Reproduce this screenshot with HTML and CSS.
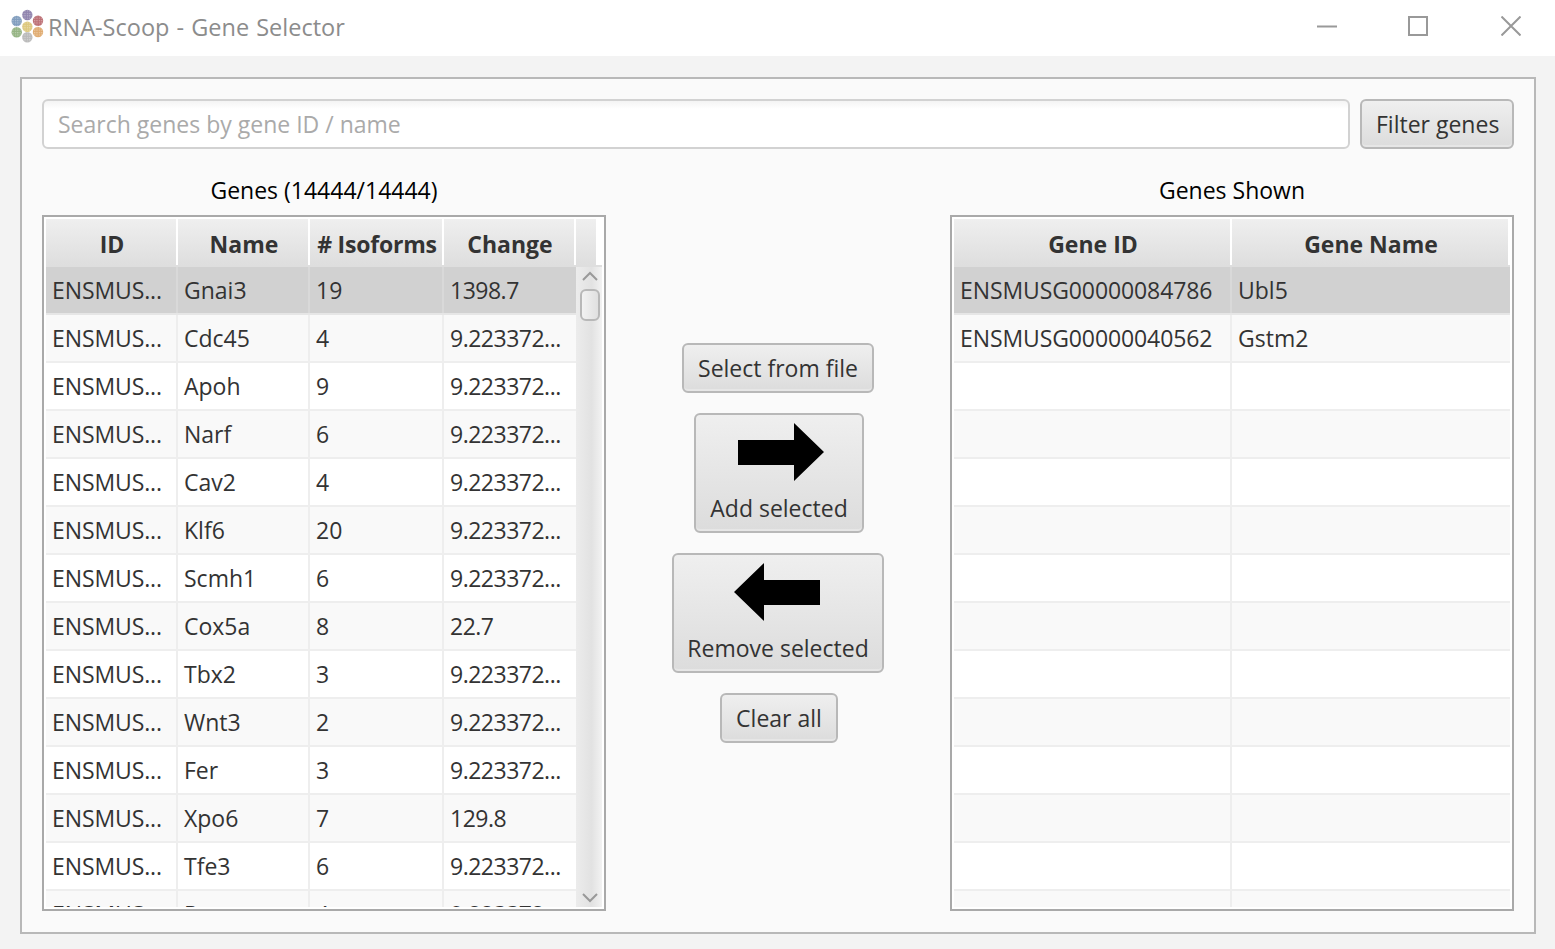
FILE: index.html

```html
<!DOCTYPE html>
<html lang="en">
<head>
  <meta charset="UTF-8" />
  <title>RNA-Scoop - Gene Selector</title>
  <link rel="stylesheet" href="styles.css">
</head>
<body>
  <div class="titlebar">
    <svg class="logo" width="36" height="36" viewBox="0 0 36 36">
      <defs>
        <pattern id="hatch" width="2.4" height="2.4" patternUnits="userSpaceOnUse">
          <rect width="1.2" height="1.2" fill="#fff" fill-opacity="0.4" />
        </pattern>
      </defs>
      <circle cx="17.3" cy="7" r="5.2" fill="#8f83ad" />
      <circle cx="6.7" cy="13" r="5.2" fill="#7f9cbd" />
      <circle cx="28" cy="12.7" r="5.2" fill="#bc6f74" />
      <circle cx="17.3" cy="18.7" r="5.2" fill="#dcc77c" />
      <circle cx="6.7" cy="24.3" r="5.2" fill="#94b382" />
      <circle cx="28" cy="24" r="5.2" fill="#e0ab70" />
      <circle cx="17.3" cy="29.3" r="5.2" fill="#b9b9b9" />
      <g fill="url(#hatch)">
        <circle cx="17.3" cy="7" r="5.2" />
        <circle cx="6.7" cy="13" r="5.2" />
        <circle cx="28" cy="12.7" r="5.2" />
        <circle cx="17.3" cy="18.7" r="5.2" />
        <circle cx="6.7" cy="24.3" r="5.2" />
        <circle cx="28" cy="24" r="5.2" />
        <circle cx="17.3" cy="29.3" r="5.2" />
      </g>
    </svg>
    <span class="title">RNA-Scoop - Gene Selector</span>
    <div class="winbtns">
      <svg width="20" height="20" viewBox="0 0 20 20"><path d="M0 10.5H20" stroke="#999" stroke-width="2" /></svg>
      <svg width="20" height="20" viewBox="0 0 20 20"><rect x="1" y="1" width="18" height="18" fill="none" stroke="#999" stroke-width="2" /></svg>
      <svg class="close" width="20" height="20" viewBox="0 0 20 20"><path d="M0.5 0.5L19.5 19.5M19.5 0.5L0.5 19.5" stroke="#999" stroke-width="2" /></svg>
    </div>
  </div>

  <div class="panel">
    <div class="searchrow">
      <input class="search" type="text" placeholder="Search genes by gene ID / name">
      <button class="btn filter">Filter genes</button>
    </div>

    <div class="columns">
      <div class="col">
        <div class="label">Genes (14444/14444)</div>
        <div class="table">
          <div class="thead">
            <div class="th w1">ID</div>
            <div class="th w2">Name</div>
            <div class="th w3 iso">#&nbsp;Isoforms</div>
            <div class="th w3 last">Change</div>
            <div class="th filler"></div>
          </div>
          <div class="tbody">
            <div class="rows">
              <div class="tr selected"><div class="td w1">ENSMUS...</div><div class="td w2">Gnai3</div><div class="td w3">19</div><div class="td num">1398.7</div></div>
              <div class="tr"><div class="td w1">ENSMUS...</div><div class="td w2">Cdc45</div><div class="td w3">4</div><div class="td num">9.223372...</div></div>
              <div class="tr"><div class="td w1">ENSMUS...</div><div class="td w2">Apoh</div><div class="td w3">9</div><div class="td num">9.223372...</div></div>
              <div class="tr"><div class="td w1">ENSMUS...</div><div class="td w2">Narf</div><div class="td w3">6</div><div class="td num">9.223372...</div></div>
              <div class="tr"><div class="td w1">ENSMUS...</div><div class="td w2">Cav2</div><div class="td w3">4</div><div class="td num">9.223372...</div></div>
              <div class="tr"><div class="td w1">ENSMUS...</div><div class="td w2">Klf6</div><div class="td w3">20</div><div class="td num">9.223372...</div></div>
              <div class="tr"><div class="td w1">ENSMUS...</div><div class="td w2">Scmh1</div><div class="td w3">6</div><div class="td num">9.223372...</div></div>
              <div class="tr"><div class="td w1">ENSMUS...</div><div class="td w2">Cox5a</div><div class="td w3">8</div><div class="td num">22.7</div></div>
              <div class="tr"><div class="td w1">ENSMUS...</div><div class="td w2">Tbx2</div><div class="td w3">3</div><div class="td num">9.223372...</div></div>
              <div class="tr"><div class="td w1">ENSMUS...</div><div class="td w2">Wnt3</div><div class="td w3">2</div><div class="td num">9.223372...</div></div>
              <div class="tr"><div class="td w1">ENSMUS...</div><div class="td w2">Fer</div><div class="td w3">3</div><div class="td num">9.223372...</div></div>
              <div class="tr"><div class="td w1">ENSMUS...</div><div class="td w2">Xpo6</div><div class="td w3">7</div><div class="td num">129.8</div></div>
              <div class="tr"><div class="td w1">ENSMUS...</div><div class="td w2">Tfe3</div><div class="td w3">6</div><div class="td num">9.223372...</div></div>
              <div class="tr"><div class="td w1">ENSMUS...</div><div class="td w2">Pcx</div><div class="td w3">4</div><div class="td num">9.223372...</div></div>
            </div>
            <div class="scrollbar">
              <svg class="chev" width="16" height="10" viewBox="0 0 16 10"><path d="M1 9L8 2L15 9" fill="none" stroke="#999" stroke-width="2" /></svg>
              <div class="thumb"></div>
              <svg class="chev down" width="16" height="10" viewBox="0 0 16 10"><path d="M1 1L8 8L15 1" fill="none" stroke="#999" stroke-width="2" /></svg>
            </div>
          </div>
        </div>
      </div>

      <div class="middle">
        <button class="btn">Select from file</button>
        <button class="btn big add">
          <svg width="86" height="58" viewBox="0 0 86 58"><path d="M0 17H56V0L86 29L56 58V42H0Z" fill="#000" /></svg>
          <span>Add selected</span>
        </button>
        <button class="btn big remove">
          <svg width="86" height="58" viewBox="0 0 86 58"><path d="M86 17H30V0L0 29L30 58V42H86Z" fill="#000" /></svg>
          <span>Remove selected</span>
        </button>
        <button class="btn clear">Clear all</button>
      </div>

      <div class="col">
        <div class="label">Genes Shown</div>
        <div class="table">
          <div class="thead">
            <div class="th w4">Gene ID</div>
            <div class="th w4">Gene Name</div>
          </div>
          <div class="tbody">
            <div class="rows">
              <div class="tr selected"><div class="td w4">ENSMUSG00000084786</div><div class="td">Ubl5</div></div>
              <div class="tr"><div class="td w4">ENSMUSG00000040562</div><div class="td">Gstm2</div></div>
              <div class="tr"><div class="td w4"></div><div class="td"></div></div>
              <div class="tr"><div class="td w4"></div><div class="td"></div></div>
              <div class="tr"><div class="td w4"></div><div class="td"></div></div>
              <div class="tr"><div class="td w4"></div><div class="td"></div></div>
              <div class="tr"><div class="td w4"></div><div class="td"></div></div>
              <div class="tr"><div class="td w4"></div><div class="td"></div></div>
              <div class="tr"><div class="td w4"></div><div class="td"></div></div>
              <div class="tr"><div class="td w4"></div><div class="td"></div></div>
              <div class="tr"><div class="td w4"></div><div class="td"></div></div>
              <div class="tr"><div class="td w4"></div><div class="td"></div></div>
              <div class="tr"><div class="td w4"></div><div class="td"></div></div>
              <div class="tr"><div class="td w4"></div><div class="td"></div></div>
            </div>
          </div>
        </div>
      </div>
    </div>
  </div>
</body>
</html>
```

FILE: styles.css

```css
* {
  box-sizing: border-box;
}
body {
  margin: 0;
  height: 949px;
  overflow: hidden;
  font-family: "Open Sans", "Noto Sans", sans-serif;
  font-size: 23px;
  background-color: #f3f3f3;
  color: #333;
}

/* window title */
.titlebar {
  height: 56px;
  background: #fff;
  display: flex;
  align-items: center;
  padding-left: 10px;
}
.logo {
  flex: none;
  margin-top: -4px;
}
.title {
  margin-left: 2px;
  margin-top: -2px;
  font-size: 23.5px;
  word-spacing: 1px;
  color: #8c8c8c;
}
.winbtns {
  margin-left: auto;
  margin-top: -4px;
  margin-right: 34px;
  display: flex;
  gap: 71px;
}
.winbtns svg {
  display: block;
}
.winbtns .close {
  margin-left: 2px;
}

/* main panel */
.panel {
  margin: 21px 19px 0 20px;
  height: 857px;
  border: 2px solid #b8b8b8;
  background: #fafafa;
  padding: 20px;
}
.searchrow {
  display: flex;
  gap: 10px;
  height: 50px;
}
.search {
  flex: 1;
  min-width: 0;
  height: 50px;
  padding: 0 14px;
  border: 2px solid #d2d2d2;
  border-radius: 6px;
  background: linear-gradient(#f4f4f4, #fff 8px);
  font-family: inherit;
  font-size: 23px;
  outline: none;
}
.search::placeholder {
  color: #aaa;
  opacity: 1;
}
.btn {
  height: 50px;
  padding: 0 14px;
  border: 2px solid #b8b8b8;
  border-radius: 6px;
  background: linear-gradient(#efefef, #dcdcdc);
  box-shadow: inset 0 -2px 0 #e6e6e6;
  font-family: inherit;
  font-size: 23px;
  color: #333;
  white-space: nowrap;
}
.filter {
  flex: none;
  width: 154px;
}

.columns {
  display: grid;
  grid-template-columns: 564px 1fr 564px;
}
.label {
  height: 66px;
  padding-top: 23px;
  line-height: 36px;
  text-align: center;
  color: #000;
}

/* tables */
.table {
  height: 696px;
  border: 2px solid #a9a9a9;
  background: #fff;
  padding: 2px;
  display: flex;
  flex-direction: column;
}
.thead {
  flex: none;
  display: flex;
  height: 48px;
  border-bottom: 2px solid #dedede;
}
.th {
  flex: none;
  margin-right: 2px;
  padding-left: 2px;
  background: linear-gradient(#efefef, #dedede);
  font-weight: 700;
  text-align: center;
  line-height: 50px;
}
.th.iso {
  letter-spacing: -0.2px;
}
.th.last {
  width: 130px;
  padding-left: 2px;
}
.filler {
  width: 20px;
  margin-right: 0;
}
.tbody {
  flex: 1;
  min-height: 0;
  display: flex;
  overflow: hidden;
}
.rows {
  flex: 1;
  min-width: 0;
}
.tr {
  display: flex;
  height: 48px;
  border-bottom: 2px solid #eee;
  background: #fff;
}
.tr:nth-child(even) {
  background-color: #f9f9f9;
}
.tr.selected {
  background-color: #d1d1d1;
  border-bottom-color: #e6e6e6;
}
.td {
  flex: none;
  height: 46px;
  padding-left: 6px;
  line-height: 47px;
  white-space: nowrap;
  border-right: 2px solid #eee;
}
.selected .td {
  border-right-color: #d9d9d9;
}
.td:last-child {
  flex: 1;
  border-right: none;
}
.num {
  letter-spacing: -0.5px;
}

.th.w1 { width: 130px; }
.th.w2 { width: 130px; }
.th.w3 { width: 132px; }
.th.w3.last { width: 130px; }
.th.w4 { width: 276px; }
.td.w1 { width: 132px; letter-spacing: -0.1px; }
.td.w2 { width: 132px; }
.td.w3 { width: 134px; }
.td.w4 { width: 278px; letter-spacing: -0.1px; }

/* scrollbar */
.scrollbar {
  flex: none;
  width: 26px;
  background: linear-gradient(to right, #ececec, #e2e2e2 60%, #f2f2f2);
  display: flex;
  flex-direction: column;
  align-items: center;
  padding: 4px 0 0 2px;
}
.chev {
  flex: none;
  display: block;
}
.thumb {
  width: 20px;
  height: 32px;
  margin-top: 8px;
  border: 2px solid #b8b8b8;
  border-radius: 6px;
  background: linear-gradient(to right, #f2f2f2, #e0e0e0);
}
.chev.down {
  margin-top: auto;
  margin-bottom: 4px;
}

/* middle buttons */
.middle {
  display: flex;
  flex-direction: column;
  align-items: center;
  gap: 20px;
  padding-top: 194px;
}
.big {
  height: 120px;
  display: flex;
  flex-direction: column;
  align-items: center;
  padding-top: 8px;
}
.big svg {
  display: block;
  flex: none;
}
.big span {
  margin-top: 10px;
  line-height: 34px;
}
.add {
  width: 170px;
  margin-left: 2px;
}
.add svg {
  margin-left: 4px;
}
.remove {
  width: 212px;
}
.remove svg {
  margin-left: -2px;
}
.clear {
  margin-left: 2px;
}
```
